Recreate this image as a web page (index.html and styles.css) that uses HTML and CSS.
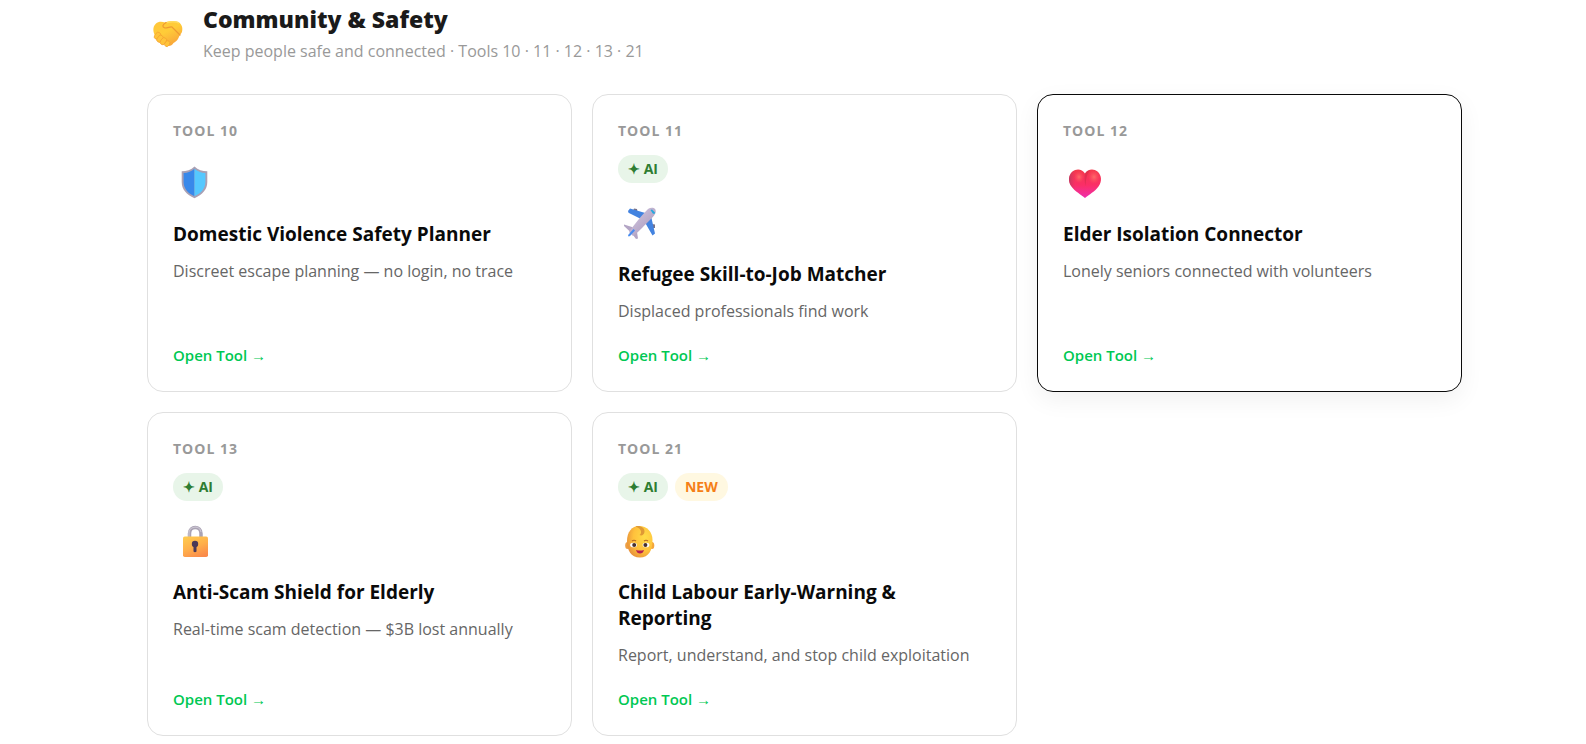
FILE: index.html
```html
<!DOCTYPE html>
<html lang="en">
<head>
<meta charset="utf-8">
<title>Community &amp; Safety</title>
<link rel="stylesheet" href="styles.css">
</head>
<body>
<main class="section">
  <header class="section-header">
    <svg class="section-icon" viewBox="0 -2 46 54" aria-hidden="true">
      <defs>
        <linearGradient id="hand" x1="0" y1="0" x2="0.6" y2="1"><stop offset="0" stop-color="#ffc63c"/><stop offset="0.5" stop-color="#ffcc38"/><stop offset="1" stop-color="#f9a63a"/></linearGradient>
      </defs>
      <path d="M9 15.500C11 13.500 15 13.500 18 14.500C22 13 28 12.800 31 14C35 16 36 20 35 24C34 26 32 28 31.500 30C30 33 28 34 26.500 35C25 38 21 39 19 37L9 29C6 25 5 19 9 15.500Z" fill="url(#hand)"/>
      <path d="M19 14.500C15 17 15 19 18 20C21 20 23 18.500 25 19L33 27" fill="none" stroke="#ee9a32" stroke-width="1.200" stroke-linecap="round"/>
      <path d="M20 14.500C23 13.500 29 13.200 32 15" fill="none" stroke="#ffdc60" stroke-width="1.500"/>
      <g stroke="#f3a030" stroke-width="0.700" fill="#ffc43a">
        <rect x="8" y="24" width="5" height="7.500" rx="2.500" transform="rotate(35 10.500 27.700)"/>
        <rect x="10.500" y="27" width="5" height="7.500" rx="2.500" transform="rotate(35 13 30.700)"/>
        <rect x="14" y="29.500" width="5" height="7.500" rx="2.500" transform="rotate(35 16.500 33)"/>
        <rect x="18" y="32.500" width="4.500" height="6" rx="2.200" transform="rotate(35 20 35.500)"/>
      </g>
    </svg>
    <div>
      <h2 class="section-title">Community &amp; Safety</h2>
      <p class="section-subtitle">Keep people safe and connected · Tools 10 · 11 · 12 · 13 · 21</p>
    </div>
  </header>

  <div class="grid">
    <article class="card">
      <span class="tool-number">TOOL 10</span>
      <svg class="tool-icon" viewBox="1 0 46 54" aria-hidden="true">
        <path d="M22.500 11.500C19 14.800 14.500 16.300 9.700 16.300V27C9.700 34.500 14.500 39.700 22.500 43.200C30.500 39.700 35.300 34.500 35.300 27V16.300C30.500 16.300 26 14.800 22.500 11.500Z" fill="#a9a0b4"/>
        <path d="M22.500 13.700C19.500 16.500 16 17.800 11.600 18V27C11.600 33.500 16 38.200 22.500 41.300Z" fill="#3888ea"/>
        <path d="M22.500 13.700C25.500 16.500 29 17.800 33.400 18V27C33.400 33.500 29 38.200 22.500 41.300Z" fill="#55c8ff"/>
      </svg>
      <h3 class="tool-title">Domestic Violence Safety Planner</h3>
      <p class="tool-text">Discreet escape planning — no login, no trace</p>
      <a class="tool-link" href="#tool-10">Open Tool →</a>
    </article>

    <article class="card">
      <span class="tool-number">TOOL 11</span>
      <div class="badges"><span class="badge badge-ai">✦ AI</span></div>
      <svg class="tool-icon" viewBox="1 0 46 54" aria-hidden="true">
        <defs><linearGradient id="plane" x1="0" y1="0" x2="1" y2="1"><stop offset="0" stop-color="#d6cae2"/><stop offset="1" stop-color="#a595b9"/></linearGradient></defs>
        <path d="M16 16L17 13.500L20 14L20.500 17ZM35 29L38 29.500L38 33L35 33Z" fill="#777287"/>
        <path d="M11 16L13 13.500L30 18.500L24 24L11.500 17.800ZM34 21L38 38.500L35.500 40.500L28 27.500Z" fill="#4383e0"/>
        <path d="M7 29.500L15 32L20 37L21 43.500L19 44L14.500 38L7 31Z" fill="#b3a5c5"/>
        <path d="M31 14C35 11.500 40 13 38.500 18C37 21.500 33 25 29 29C24 34 19 39 16 41L12 37C16 31 25 20 31 14Z" fill="url(#plane)"/>
        <path d="M16.500 34L18 35.500L13 41C11.500 42 10.500 41 11.500 39.500Z" fill="#4a8df0"/>
        <path d="M33.500 15L35 14.500L38 17.500L37.500 19L35.800 18.500Z" fill="#25a9df"/>
      </svg>
      <h3 class="tool-title">Refugee Skill-to-Job Matcher</h3>
      <p class="tool-text">Displaced professionals find work</p>
      <a class="tool-link" href="#tool-11">Open Tool →</a>
    </article>

    <article class="card card-active">
      <span class="tool-number">TOOL 12</span>
      <svg class="tool-icon" viewBox="1 0 46 54" aria-hidden="true">
        <defs>
          <linearGradient id="heart" x1="0" y1="0" x2="0" y2="1"><stop offset="0" stop-color="#f43a4c"/><stop offset="0.550" stop-color="#fb2e67"/><stop offset="1" stop-color="#ee2fae"/></linearGradient>
          <radialGradient id="heart-glow"><stop offset="0" stop-color="#ff6a68"/><stop offset="1" stop-color="#ff5060" stop-opacity="0"/></radialGradient>
          <linearGradient id="heart-side"><stop offset="0" stop-color="#a93962" stop-opacity="0.700"/><stop offset="0.400" stop-color="#d23a60" stop-opacity="0"/></linearGradient>
        </defs>
        <path d="M23 18.500C20 13.500 14 13.500 10.500 16.500C6 20.500 6 27 9.500 31.500C13 36.500 19 39.500 23 43C27 39.500 33 36.500 36.500 31.500C40 27 40 20.500 35.500 16.500C32 13.500 26 13.500 23 18.500Z" fill="url(#heart)"/>
        <ellipse cx="17" cy="22" rx="5" ry="6" fill="url(#heart-glow)"/>
        <ellipse cx="32" cy="22" rx="6" ry="7" fill="url(#heart-glow)"/>
        <path d="M23 18.500C24.500 16 26 15 28 15.200C25 19 24 23 23.500 31C22.500 26 22.300 22 23 18.500Z" fill="#cb2947" opacity="0.500"/>
        <path d="M23 18.500C20 13.500 14 13.500 10.500 16.500C6 20.500 6 27 9.500 31.500C13 36.500 19 39.500 23 43Z" fill="url(#heart-side)"/>
      </svg>
      <h3 class="tool-title">Elder Isolation Connector</h3>
      <p class="tool-text">Lonely seniors connected with volunteers</p>
      <a class="tool-link" href="#tool-12">Open Tool →</a>
    </article>

    <article class="card">
      <span class="tool-number">TOOL 13</span>
      <div class="badges"><span class="badge badge-ai">✦ AI</span></div>
      <svg class="tool-icon" viewBox="1 0 46 54" aria-hidden="true">
        <defs><linearGradient id="lock" x1="0.200" y1="0" x2="0.700" y2="1"><stop offset="0" stop-color="#ffc94e"/><stop offset="0.500" stop-color="#ffb04b"/><stop offset="1" stop-color="#fa8a4b"/></linearGradient></defs>
        <path d="M17.500 26V20.500C17.500 12.500 29 12.500 29 20.500V26" fill="none" stroke="#aaa3b4" stroke-width="3.500"/>
        <path d="M17 24V20C17 13 28 12 29 19" fill="none" stroke="#cbc5d2" stroke-width="1.200"/>
        <rect x="11" y="23.500" width="25" height="20.500" rx="1.800" fill="url(#lock)"/>
        <circle cx="23" cy="31" r="3.200" fill="#4b3857"/><path d="M21.500 32H24.500V38.500Q23 40 21.500 38.500Z" fill="#4b3857"/>
      </svg>
      <h3 class="tool-title">Anti-Scam Shield for Elderly</h3>
      <p class="tool-text">Real-time scam detection — $3B lost annually</p>
      <a class="tool-link" href="#tool-13">Open Tool →</a>
    </article>

    <article class="card">
      <span class="tool-number">TOOL 21</span>
      <div class="badges"><span class="badge badge-ai">✦ AI</span><span class="badge badge-new">NEW</span></div>
      <svg class="tool-icon" viewBox="1 0 46 54" aria-hidden="true">
        <defs><radialGradient id="face" cx="0.700" cy="0.350" r="0.750"><stop offset="0" stop-color="#ffdc47"/><stop offset="0.600" stop-color="#ffc13c"/><stop offset="1" stop-color="#e8923b"/></radialGradient></defs>
        <ellipse cx="10.500" cy="32.500" rx="2.300" ry="3.500" fill="#eda044"/><ellipse cx="35" cy="32.500" rx="2.300" ry="3.500" fill="#f4a63b"/>
        <path d="M22 13C30 13 35.500 19 35.500 27C35.500 37 32 44.500 22.800 44.500C14 44.500 10 37 10 28C10 19 15 13 22 13Z" fill="url(#face)"/>
        <path d="M18.500 13.500C23 12 28 15 27.500 19C27 22 24.500 23 22.500 22C25 20 25 16 18.500 13.500Z" fill="#df9935"/>
        <path d="M15 28Q17 26.500 19 28M27 28Q29 26.500 31 28" fill="none" stroke="#b56a24" stroke-width="1.200"/>
        <ellipse cx="16.500" cy="32" rx="3.400" ry="2.300" fill="#fff"/><ellipse cx="29" cy="32" rx="3.400" ry="2.300" fill="#fff"/>
        <circle cx="17.200" cy="32" r="2" fill="#47302f"/><circle cx="28.400" cy="32" r="2" fill="#47302f"/>
        <path d="M19 37Q23 38 27 37Q26 40.500 23 40.500Q20 40.500 19 37Z" fill="#b51f50"/>
      </svg>
      <h3 class="tool-title">Child Labour Early-Warning &amp; Reporting</h3>
      <p class="tool-text">Report, understand, and stop child exploitation</p>
      <a class="tool-link" href="#tool-21">Open Tool →</a>
    </article>
  </div>
</main>
</body>
</html>
```
FILE: styles.css
```css
* { box-sizing: border-box; }

body {
  margin: 0;
  background: #fff;
  color: #0a0a0a;
  font-family: "Open Sans", "Noto Sans", sans-serif;
  font-size: 16px;
}

h2, h3, p { margin: 0; }

.section { padding: 0 124px 8px 147px; }

.section-header {
  display: flex;
  align-items: center;
  gap: 10px;
  padding: 1px 0 29px;
}

.section-icon { width: 46px; height: 54px; flex: none; }

.section-title {
  color: #1a1a1a;
  font-size: 23px;
  font-weight: 800;
  line-height: 36px;
}

.section-subtitle {
  color: #999;
  font-size: 16px;
  line-height: 28px;
}

.grid {
  display: grid;
  grid-template-columns: repeat(3, minmax(0, 1fr));
  gap: 20px;
}

.card {
  display: flex;
  flex-direction: column;
  align-items: flex-start;
  gap: 12px;
  padding: 24px 25px;
  border: 1px solid #e0e0e0;
  border-radius: 16px;
  background: #fff;
}

.card-active {
  border-color: #0a0a0a;
  box-shadow: 0 8px 24px rgba(0, 0, 0, 0.06);
}

.tool-number {
  color: #999;
  font-size: 14px;
  font-weight: 700;
  line-height: 24px;
  letter-spacing: 1px;
}

.badges { display: flex; gap: 7px; }

.badge {
  padding: 0 10px;
  border-radius: 14px;
  font-size: 14px;
  font-weight: 700;
  line-height: 28px;
}

.badge-ai { background: #e8f5e9; color: #2e7d32; }
.badge-new { background: #fff8e1; color: #f57f17; }

.tool-icon { width: 46px; height: 54px; }

.tool-title {
  font-size: 19px;
  font-weight: 700;
  line-height: 26px;
}

.tool-text {
  color: #666;
  font-size: 16px;
  line-height: 24px;
}

.tool-link {
  margin-top: auto;
  padding-top: 8px;
  color: #00c853;
  font-size: 15px;
  font-weight: 600;
  line-height: 24px;
  text-decoration: none;
}
```
